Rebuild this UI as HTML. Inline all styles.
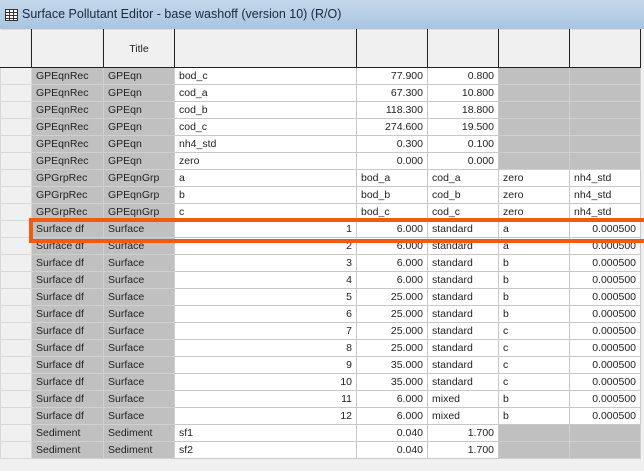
<!DOCTYPE html><html><head><style>
body{margin:0;width:644px;height:471px;overflow:hidden;background:#f0f0f0;font-family:"Liberation Sans",sans-serif;position:relative}
.tb{position:absolute;left:0;top:0;width:644px;height:29px;background:linear-gradient(#c4d8ec,#a9c4e0);}
.tt{position:absolute;left:22px;top:7px;font-size:12.5px;color:#1a2a3a}
.ic{position:absolute;left:5px;top:9px;width:11px;height:10px;border:1px solid #333;background:
linear-gradient(90deg,transparent 3px,#333 3px,#333 4px,transparent 4px,transparent 7px,#333 7px,#333 8px,transparent 8px),
linear-gradient(transparent 2px,#333 2px,#333 3px,transparent 3px,transparent 5px,#333 5px,#333 6px,transparent 6px,transparent 8px,#333 8px,#333 9px,transparent 9px);background-color:#fff}
table{position:absolute;left:0;top:29px;border-collapse:collapse;table-layout:fixed;font-size:10.5px;color:#222}
td{height:16px;border:1px solid #c8c8c8;padding:0 4px;white-space:nowrap;overflow:hidden;background:#fff}
tr.h td{height:37px;background:#f0f0f0;border:1px solid #222;border-top:1px solid #ddd;text-align:center}
tr.h td:first-child{border-left:none;border-right:1px solid #222}
td.r0{background:#f0f0f0;border-color:#d8d8d8}
td.g{background:#c0c0c0;border-color:#d0d0d0}
td.n{text-align:right}
.box{position:absolute;left:29px;top:218px;width:611px;height:17px;border:4px solid #f25a10}
</style></head><body>
<div class="tb"><div class="ic"></div><div class="tt">Surface Pollutant Editor - base washoff (version 10) (R/O)</div></div>
<table>
<colgroup><col style="width:31px"><col style="width:72px"><col style="width:71px"><col style="width:182px"><col style="width:71px"><col style="width:71px"><col style="width:71px"><col style="width:71px"></colgroup>
<tr class="h"><td></td><td></td><td>Title</td><td></td><td></td><td></td><td></td><td></td></tr>
<tr><td class="r0"></td><td class="g">GPEqnRec</td><td class="g">GPEqn</td><td>bod_c</td><td class="n">77.900</td><td class="n">0.800</td><td class="g"></td><td class="g"></td></tr>
<tr><td class="r0"></td><td class="g">GPEqnRec</td><td class="g">GPEqn</td><td>cod_a</td><td class="n">67.300</td><td class="n">10.800</td><td class="g"></td><td class="g"></td></tr>
<tr><td class="r0"></td><td class="g">GPEqnRec</td><td class="g">GPEqn</td><td>cod_b</td><td class="n">118.300</td><td class="n">18.800</td><td class="g"></td><td class="g"></td></tr>
<tr><td class="r0"></td><td class="g">GPEqnRec</td><td class="g">GPEqn</td><td>cod_c</td><td class="n">274.600</td><td class="n">19.500</td><td class="g"></td><td class="g"></td></tr>
<tr><td class="r0"></td><td class="g">GPEqnRec</td><td class="g">GPEqn</td><td>nh4_std</td><td class="n">0.300</td><td class="n">0.100</td><td class="g"></td><td class="g"></td></tr>
<tr><td class="r0"></td><td class="g">GPEqnRec</td><td class="g">GPEqn</td><td>zero</td><td class="n">0.000</td><td class="n">0.000</td><td class="g"></td><td class="g"></td></tr>
<tr><td class="r0"></td><td class="g">GPGrpRec</td><td class="g">GPEqnGrp</td><td>a</td><td>bod_a</td><td>cod_a</td><td>zero</td><td>nh4_std</td></tr>
<tr><td class="r0"></td><td class="g">GPGrpRec</td><td class="g">GPEqnGrp</td><td>b</td><td>bod_b</td><td>cod_b</td><td>zero</td><td>nh4_std</td></tr>
<tr><td class="r0"></td><td class="g">GPGrpRec</td><td class="g">GPEqnGrp</td><td>c</td><td>bod_c</td><td>cod_c</td><td>zero</td><td>nh4_std</td></tr>
<tr><td class="r0"></td><td class="g">Surface df</td><td class="g">Surface</td><td class="n">1</td><td class="n">6.000</td><td>standard</td><td>a</td><td class="n">0.000500</td></tr>
<tr><td class="r0"></td><td class="g">Surface df</td><td class="g">Surface</td><td class="n">2</td><td class="n">6.000</td><td>standard</td><td>a</td><td class="n">0.000500</td></tr>
<tr><td class="r0"></td><td class="g">Surface df</td><td class="g">Surface</td><td class="n">3</td><td class="n">6.000</td><td>standard</td><td>b</td><td class="n">0.000500</td></tr>
<tr><td class="r0"></td><td class="g">Surface df</td><td class="g">Surface</td><td class="n">4</td><td class="n">6.000</td><td>standard</td><td>b</td><td class="n">0.000500</td></tr>
<tr><td class="r0"></td><td class="g">Surface df</td><td class="g">Surface</td><td class="n">5</td><td class="n">25.000</td><td>standard</td><td>b</td><td class="n">0.000500</td></tr>
<tr><td class="r0"></td><td class="g">Surface df</td><td class="g">Surface</td><td class="n">6</td><td class="n">25.000</td><td>standard</td><td>b</td><td class="n">0.000500</td></tr>
<tr><td class="r0"></td><td class="g">Surface df</td><td class="g">Surface</td><td class="n">7</td><td class="n">25.000</td><td>standard</td><td>c</td><td class="n">0.000500</td></tr>
<tr><td class="r0"></td><td class="g">Surface df</td><td class="g">Surface</td><td class="n">8</td><td class="n">25.000</td><td>standard</td><td>c</td><td class="n">0.000500</td></tr>
<tr><td class="r0"></td><td class="g">Surface df</td><td class="g">Surface</td><td class="n">9</td><td class="n">35.000</td><td>standard</td><td>c</td><td class="n">0.000500</td></tr>
<tr><td class="r0"></td><td class="g">Surface df</td><td class="g">Surface</td><td class="n">10</td><td class="n">35.000</td><td>standard</td><td>c</td><td class="n">0.000500</td></tr>
<tr><td class="r0"></td><td class="g">Surface df</td><td class="g">Surface</td><td class="n">11</td><td class="n">6.000</td><td>mixed</td><td>b</td><td class="n">0.000500</td></tr>
<tr><td class="r0"></td><td class="g">Surface df</td><td class="g">Surface</td><td class="n">12</td><td class="n">6.000</td><td>mixed</td><td>b</td><td class="n">0.000500</td></tr>
<tr><td class="r0"></td><td class="g">Sediment</td><td class="g">Sediment</td><td>sf1</td><td class="n">0.040</td><td class="n">1.700</td><td class="g"></td><td class="g"></td></tr>
<tr><td class="r0"></td><td class="g">Sediment</td><td class="g">Sediment</td><td>sf2</td><td class="n">0.040</td><td class="n">1.700</td><td class="g"></td><td class="g"></td></tr>
</table>
<div class="box"></div>
</body></html>
